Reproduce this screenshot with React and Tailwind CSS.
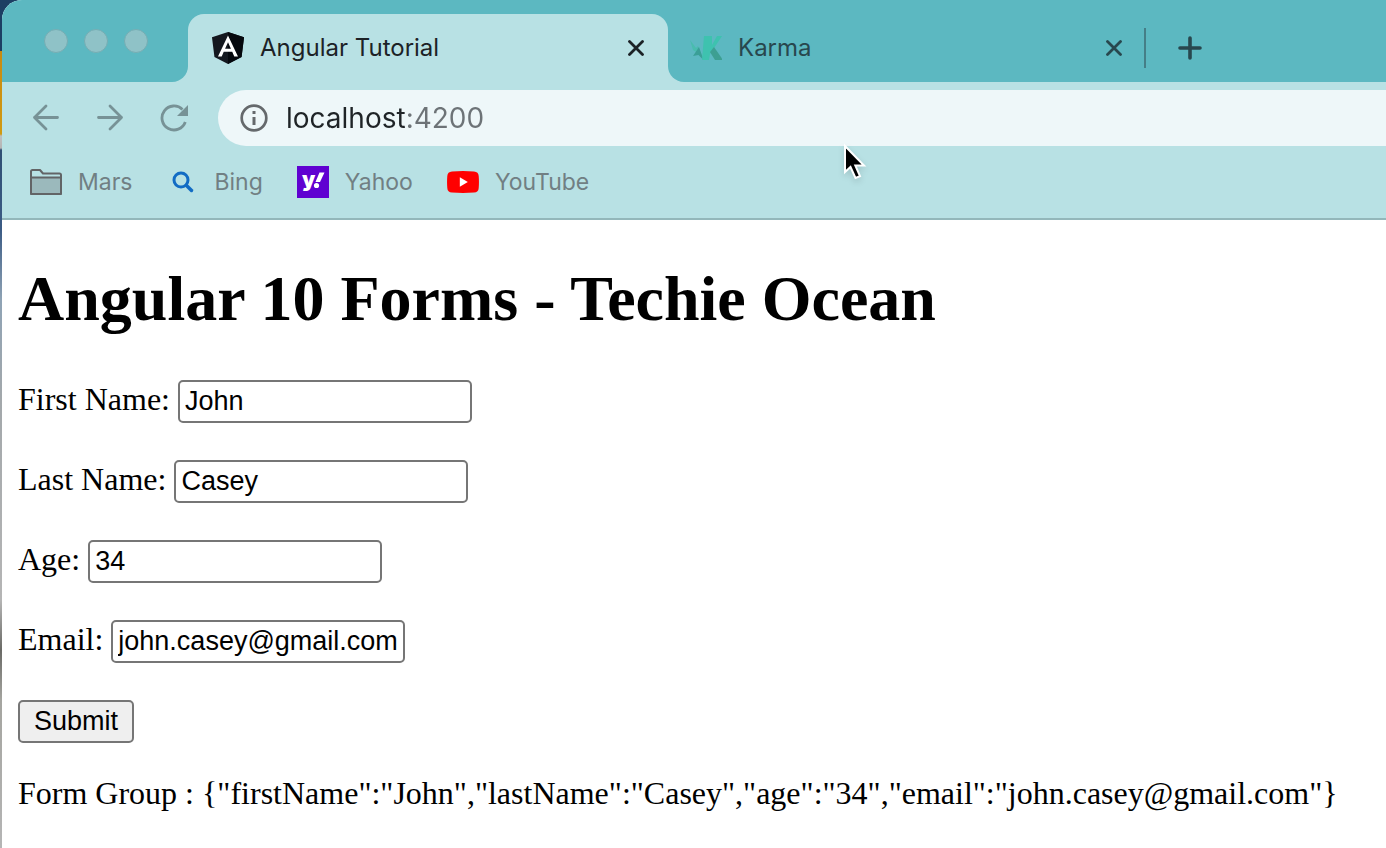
import React, { useState } from "react";

const fields = [
  { name: "firstName", label: "First Name:", value: "John" },
  { name: "lastName", label: "Last Name:", value: "Casey" },
  { name: "age", label: "Age:", value: "34" },
  { name: "email", label: "Email:", value: "john.casey@gmail.com" },
];

function AngularLogo() {
  return (
    <svg className="size-8 shrink-0" viewBox="32 30 186 200" preserveAspectRatio="none" aria-hidden="true">
      <path fill="#14181f" d="M125 30 31.9 63.2l14.2 123.1L125 230l78.9-43.7 14.2-123.1z" />
      <path fill="#05080d" d="M125 30v200l78.9-43.7 14.2-123.1z" />
      <path fill="#fff" d="M125 52.1 66.8 182.6h21.7l11.7-29.2h49.4l11.7 29.2H183zm17 83.3h-34l17-40.9z" />
    </svg>
  );
}

function KarmaLogo() {
  return (
    <svg className="h-6 w-8 shrink-0" viewBox="0 0 32 24" aria-hidden="true">
      <path fill="#49bcae" d="M0 4 6 12 8 10 14 24 8 17 3 14z" />
      <path fill="#3a9f97" d="m3 20 6-9 4.500 13-5-5z" />
      <path fill="#3ec2af" d="M14 0h8v9l5-9h5l-8 12-4 6-1 6h-7z" />
      <path fill="#3d9f92" d="m20 16 4-5 9 13h-8z" />
    </svg>
  );
}

function CloseIcon() {
  return (
    <svg className="size-4" viewBox="0 0 16 16" fill="none" stroke="currentColor" strokeWidth="2.8" strokeLinecap="round" aria-hidden="true">
      <path d="m1.500 1.500 13 13M14.500 1.500l-13 13" />
    </svg>
  );
}

function TabStrip() {
  return (
    <div className="flex h-[82px] bg-[#b8e1e4]">
      <div className="flex w-[186px] shrink-0 gap-4 rounded-br-[16px] bg-[#5cb8c1] pt-[29px] pl-[42px]">
        {["Close window", "Minimize window", "Zoom window"].map((label) => (
          <button key={label} aria-label={label} className="size-6 rounded-full border border-[#75adb3] bg-[#8fc2c7]" />
        ))}
      </div>
      <div className="w-[480px] shrink-0 bg-[#5cb8c1] pt-[14px]">
        <div className="flex h-full items-center rounded-t-[16px] bg-[#b8e1e4] px-6 text-[#1c2226]">
          <AngularLogo />
          <span className="ml-4 flex-1 text-2xl">Angular Tutorial</span>
          <button aria-label="Close Angular Tutorial"><CloseIcon /></button>
        </div>
      </div>
      <div className="flex min-w-0 flex-1 items-center rounded-bl-[16px] bg-[#5cb8c1] pt-[14px] text-[#28474e]">
        <div className="flex h-10 w-[478px] shrink-0 items-center border-r-2 border-[#457e87] pr-[22px] pl-[22px]">
          <KarmaLogo />
          <span className="ml-4 flex-1 text-2xl">Karma</span>
          <button aria-label="Close Karma"><CloseIcon /></button>
        </div>
        <button aria-label="New tab" className="ml-8">
          <svg className="size-6" viewBox="0 0 24 24" fill="none" stroke="currentColor" strokeWidth="3.6" strokeLinecap="round" aria-hidden="true">
            <path d="M12 2v20M2 12h20" />
          </svg>
        </button>
      </div>
    </div>
  );
}

function Toolbar() {
  return (
    <div className="flex items-center pt-2 pl-[30px] text-[#779296]">
      <div className="flex gap-9">
        <button aria-label="Back">
          <svg className="size-7" viewBox="0 0 28 28" fill="none" stroke="currentColor" strokeWidth="2.8" strokeLinecap="round" strokeLinejoin="round" aria-hidden="true">
            <path d="M25.500 13.500H2.500M14 2 2.500 13.500 14 25" />
          </svg>
        </button>
        <button aria-label="Forward">
          <svg className="size-7" viewBox="0 0 28 28" fill="none" stroke="currentColor" strokeWidth="2.8" strokeLinecap="round" strokeLinejoin="round" aria-hidden="true">
            <path d="M2.500 13.500h23M14 2l11.500 11.500L14 25" />
          </svg>
        </button>
        <button aria-label="Reload">
          <svg className="size-7" viewBox="0 0 28 28" fill="none" stroke="currentColor" strokeWidth="2.8" aria-hidden="true">
            <path d="M22.500 5.500A12 12 0 1 0 25.300 18" />
            <path fill="currentColor" stroke="none" d="M28 1v11H17z" />
          </svg>
        </button>
      </div>
      <div className="ml-[30px] flex h-14 min-w-0 flex-1 items-center rounded-l-full bg-[#eef7f9] pl-[22px]">
        <svg className="size-7 shrink-0 text-[#65696c]" viewBox="0 0 28 28" fill="none" stroke="currentColor" strokeWidth="2.7" aria-hidden="true">
          <circle cx="14" cy="14" r="12.300" />
          <path strokeWidth="3" d="M14 13v8M14 7v3" />
        </svg>
        <input
          aria-label="Address"
          defaultValue="localhost:4200"
          className="ml-[18px] min-w-0 flex-1 bg-[linear-gradient(90deg,#1f2427_119px,#6d7377_119px)] bg-clip-text text-[28px] text-transparent outline-none"
        />
      </div>
    </div>
  );
}

function Bookmarks() {
  return (
    <nav className="flex h-[74px] items-center gap-[34px] border-b-2 border-[#93b7ba] pl-7 text-[23px] text-[#717f83]">
      <a href="#mars" className="flex items-center gap-4">
        <svg className="h-[26px] w-8" viewBox="0 0 32 26" fill="none" stroke="#626466" strokeWidth="2" strokeLinejoin="round" aria-hidden="true">
          <path d="M1 24V2.500Q1 1 2.500 1H10l3 3.500h16.500Q31 4.500 31 6v18q0 1-1 1H2q-1 0-1-1z" />
          <path fill="#9bb9bc" d="M1 8.500h30V25H1z" />
        </svg>
        Mars
      </a>
      <a href="#bing" className="flex items-center gap-4">
        <svg className="size-8" viewBox="0 0 32 32" fill="none" stroke="#126cc4" strokeLinecap="round" aria-hidden="true">
          <circle cx="14" cy="14" r="7" strokeWidth="3" />
          <path d="m19.500 19.500 5 5" strokeWidth="3.500" />
        </svg>
        Bing
      </a>
      <a href="#yahoo" className="flex items-center gap-4">
        <svg className="size-8" viewBox="0 0 32 32" aria-hidden="true">
          <path fill="#5f01d1" d="M0 0h32v32H0z" />
          <text x="5" y="21" fill="#fff" fontSize="21" fontWeight="900" fontFamily="Inter, sans-serif">y</text>
          <path fill="#fff" d="m22.500 6.500h5L23 16h-4.500z" />
          <circle cx="19.500" cy="19.500" r="2.600" fill="#fff" />
        </svg>
        Yahoo
      </a>
      <a href="#youtube" className="flex items-center gap-4">
        <svg className="h-[22px] w-8" viewBox="0 0 32 22" aria-hidden="true">
          <path fill="#f00" d="M5 .4Q16-.4 27 .4q4.500.3 4.700 4.600.5 6 0 12-.2 4.300-4.700 4.600-11 .8-22 0Q.5 21.300.3 17q-.5-6 0-12Q.5.700 5 .4z" />
          <path fill="#fff" d="M12.800 6.300 20.800 11l-8 4.700z" />
        </svg>
        YouTube
      </a>
    </nav>
  );
}

function Form() {
  const [values, setValues] = useState(Object.fromEntries(fields.map((f) => [f.name, f.value])));
  return (
    <main className="flex-1 bg-white px-4 pt-[42px] pb-4 font-['Liberation_Serif',serif] text-[32px] leading-[37px] text-black">
      <h1 className="text-[64px] leading-[74px] font-bold">Angular 10 Forms - Techie Ocean</h1>
      <form className="mt-[44px] flex flex-col items-start gap-[37px]" onSubmit={(e) => e.preventDefault()}>
        {fields.map((f) => (
          <div key={f.name} className="flex items-baseline gap-2">
            <label htmlFor={f.name}>{f.label}</label>
            <input
              id={f.name}
              value={values[f.name]}
              onChange={(e) => setValues({ ...values, [f.name]: e.target.value })}
              className="h-[43px] w-[294px] rounded-[5px] border-2 border-[#767676] bg-white px-[5px] font-['Liberation_Sans',sans-serif] text-[27px]"
            />
          </div>
        ))}
        <button className="h-[43px] rounded-[5px] border-2 border-[#767676] bg-[#efefef] px-[14px] font-['Liberation_Sans',sans-serif] text-[27px]">
          Submit
        </button>
      </form>
      <p className="mt-8">Form Group : {JSON.stringify(values)}</p>
    </main>
  );
}

export default function App() {
  return (
    <div className="relative min-h-screen bg-[linear-gradient(180deg,#1c3f63_0px,#1c3f63_51px,#c98a10_51px,#d09a12_134px,#c0c0c0_136px,#b5b5b5_148px,#2f4f74_150px,#3c5c85_230px,#8fa3b5_300px,#a3a8ab_400px,#b5b5b5_600px,#6a6a66_650px,#a5a5a0_700px,#b5b5b5_848px)] pl-[2px] font-['Inter',sans-serif]">
      <div className="flex min-h-screen flex-col overflow-hidden rounded-tl-[20px] bg-[#b8e1e4]">
        <TabStrip />
        <Toolbar />
        <Bookmarks />
        <Form />
      </div>
      <svg className="pointer-events-none absolute top-[143px] left-[842px] h-[40px] w-[28px] drop-shadow-md" viewBox="0 0 28 40" aria-hidden="true">
        <path fill="#000" stroke="#fff" strokeWidth="2" d="M3 3v26l5.500-5 5 11 4.500-1.800-4.700-10.700H22z" />
      </svg>
    </div>
  );
}
